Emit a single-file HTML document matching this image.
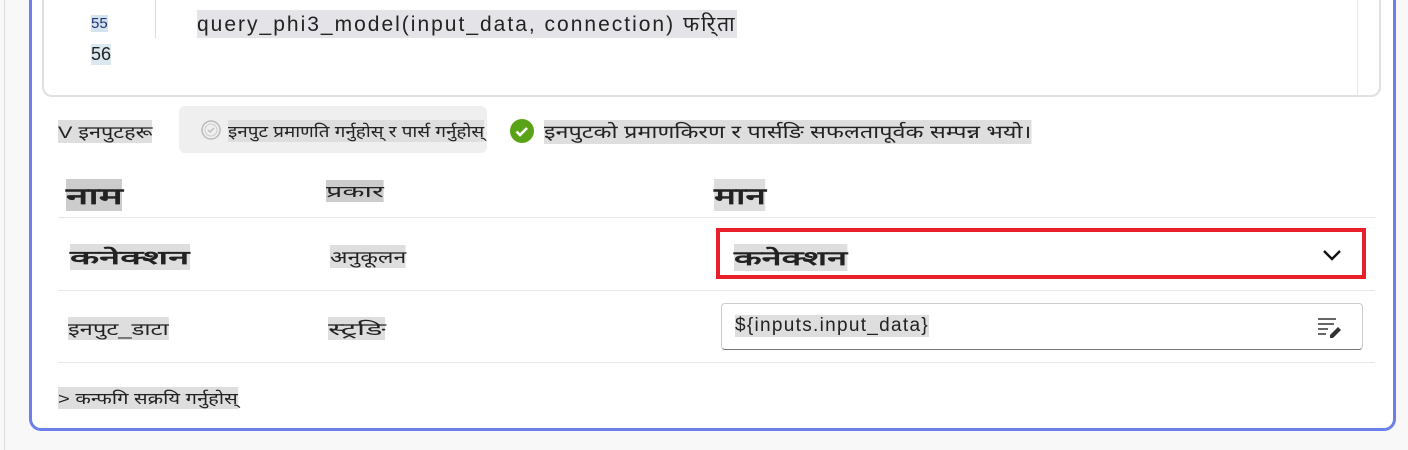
<!DOCTYPE html>
<html><head><meta charset="utf-8"><style>
*{margin:0;padding:0;box-sizing:border-box}
body{width:1408px;height:450px;background:#f8f8f8;font-family:"Liberation Sans","DejaVu Sans",sans-serif;position:relative;overflow:hidden;color:#222}
.vl{position:absolute;left:4px;top:0;width:1px;height:450px;background:#ddd}
.panel{position:absolute;left:29px;top:-10px;width:1367px;height:441px;background:#fff;border:3px solid #6b80ea;border-top:none;border-radius:0 0 12px 12px}
.code{position:absolute;left:42px;top:-10px;width:1339px;height:107px;border:2px solid #e0e0e0;border-top:none;border-radius:0 0 10px 10px;background:#fff}
.ab{position:absolute;white-space:nowrap;transform-origin:0 50%}
.hl{background:#dedede}
.gutter{position:absolute;left:155px;top:0;width:1px;height:38px;background:#ddd}
.sb{position:absolute;left:1357px;top:0;width:1px;height:96px;background:#e8e8e8}
.hr{position:absolute;left:58px;width:1317px;height:1px;background:#e6e6e6}
</style></head><body>
<div class="vl"></div>
<div class="panel"></div>
<div class="code"></div>
<div class="gutter"></div>
<div class="sb"></div>
<div class="ab hl" style="left:91px;top:15px;font-size:15px;color:#237;background:#d4e4ee">55</div>
<div class="ab hl" style="left:91px;top:44px;font-size:18px;background:#dce8f0">56</div>
<div class="ab hl" style="left:197px;top:10px;font-size:21px;color:#222;background:#e4e4e8;letter-spacing:2px">query_phi3_model(input_data, connection) फरि्ता</div>

<div class="ab hl" style="left:58px;top:120px;font-size:17px;transform:scaleX(1.27)">V इनपुटहरू</div>
<div class="ab" style="left:179px;top:106px;width:308px;height:47px;background:#efefef;border-radius:6px"></div>
<svg class="ab" style="left:200px;top:117px" width="22" height="26" viewBox="0 0 22 26"><circle cx="11" cy="13" r="9" fill="none" stroke="#bbb" stroke-width="1.5"/><circle cx="11" cy="13" r="6" fill="none" stroke="#ccc" stroke-width="1"/><path d="M8 13l2 2 4-4" stroke="#bbb" fill="none" stroke-width="1.3"/></svg>
<div class="ab hl" style="left:228px;top:120px;font-size:16px;transform:scaleX(1.18)">इनपुट प्रमाणति गर्नुहोस् र पार्स गर्नुहोस्</div>
<svg class="ab" style="left:510px;top:119px" width="24" height="24" viewBox="0 0 24 24"><circle cx="12" cy="12" r="12" fill="#5aa316"/><path d="M6.5 12.5l3.5 3.5 7-7" stroke="#fff" stroke-width="2.6" fill="none"/></svg>
<div class="ab hl" style="left:544px;top:120px;font-size:18px;transform:scaleX(1.3)">इनपुटको प्रमाणकिरण र पार्सङि सफलतापूर्वक सम्पन्न भयो।</div>

<div class="ab hl" style="left:66px;top:179px;font-size:23px;font-weight:bold;background:#ccc;transform:scaleX(1.75)">नाम</div>
<div class="ab hl" style="left:326px;top:180px;font-size:16px;background:#ccc;transform:scaleX(1.8)">प्रकार</div>
<div class="ab hl" style="left:714px;top:179px;font-size:23px;font-weight:bold;background:#ddd;transform:scaleX(1.6)">मान</div>
<div class="hr" style="top:217px"></div>
<div class="ab hl" style="left:70px;top:244px;font-size:19px;font-weight:bold;transform:scaleX(2)">कनेक्शन</div>
<div class="ab hl" style="left:330px;top:245px;font-size:17px;transform:scaleX(1.35)">अनुकूलन</div>
<div class="ab" style="left:716px;top:228px;width:650px;height:51px;border:4px solid #e8202a"></div>
<div class="ab hl" style="left:734px;top:244px;font-size:20px;font-weight:bold;transform:scaleX(1.8)">कनेक्शन</div>
<svg class="ab" style="left:1322px;top:248px" width="20" height="14" viewBox="0 0 20 14"><path d="M2 3l8 8 8-8" stroke="#111" stroke-width="2.4" fill="none"/></svg>
<div class="hr" style="top:290px"></div>
<div class="ab hl" style="left:68px;top:317px;font-size:17px;transform:scaleX(1.4)">इनपुट_डाटा</div>
<div class="ab hl" style="left:328px;top:317px;font-size:17px;transform:scaleX(1.9)">स्ट्रङि</div>
<div class="ab" style="left:721px;top:303px;width:642px;height:47px;border:1px solid #ccc;border-bottom-color:#777;border-radius:4px;background:#fff"></div>
<div class="ab hl" style="left:735px;top:315px;font-size:19px;letter-spacing:1.3px">${inputs.input_data}</div>
<svg class="ab" style="left:1316px;top:316px" width="26" height="22" viewBox="0 0 26 22"><path d="M2 3h18M2 8h16M2 13h10M2 18h8" stroke="#333" stroke-width="1.5"/><path d="M14 19l8-8 3 3-8 8h-3z" fill="#333"/></svg>
<div class="hr" style="top:362px"></div>
<div class="ab hl" style="left:58px;top:387px;font-size:16px;transform:scaleX(1.26)">&gt; कन्फगि सक्रयि गर्नुहोस्</div>
</body></html>
